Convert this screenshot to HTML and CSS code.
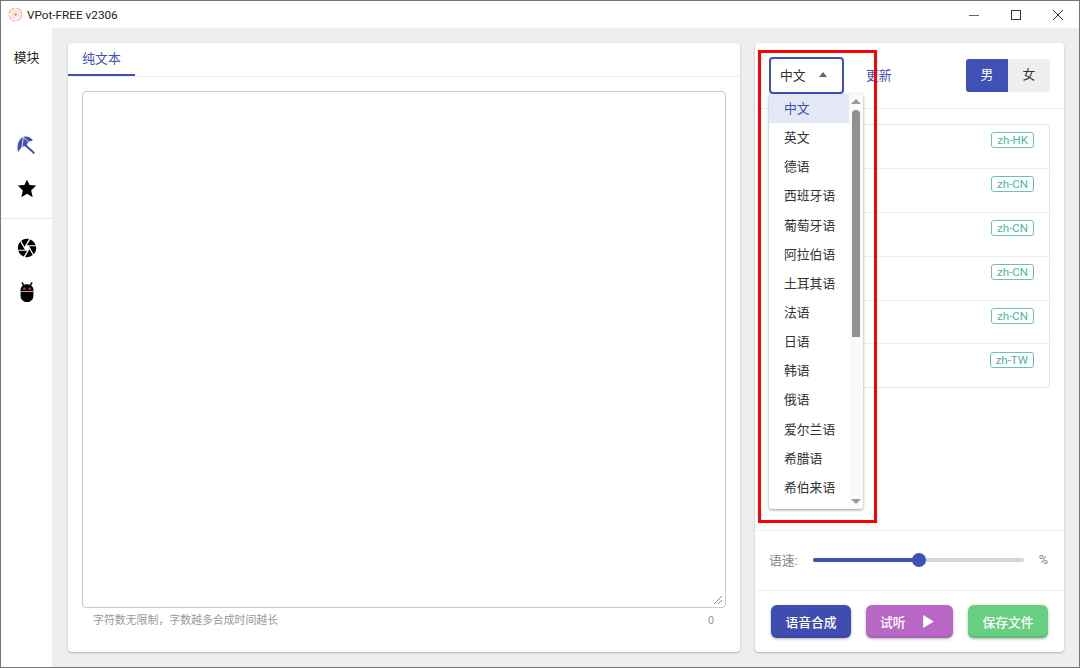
FILE: index.html
```html
<!DOCTYPE html>
<html lang="zh-CN">
<head>
    <meta charset="UTF-8">
    <title>VPot-FREE v2306</title>
    <link rel="stylesheet" href="styles.css">
</head>
<body>
    <div class="window">
        <div class="titlebar">
            <svg class="logo" viewBox="0 0 16 16">
                <circle cx="8" cy="8" r="6.6" fill="none" stroke="#f9b7a5" stroke-width="1.5" stroke-dasharray="9 1.4"/>
                <circle cx="8" cy="8" r="3.6" fill="none" stroke="#fbd0c4" stroke-width="1.2"/>
                <circle cx="8" cy="8" r="1.5" fill="#f08a70"/>
            </svg>
            <span class="app-name">VPot-FREE v2306</span>
            <div class="win-btns">
                <svg viewBox="0 0 12 12"><path d="M1 6.5H11" stroke="#666" stroke-width="1"/></svg>
                <svg viewBox="0 0 12 12"><rect x="1.5" y="1.5" width="9" height="9" fill="none" stroke="#333" stroke-width="1"/></svg>
                <svg viewBox="0 0 12 12"><path d="M1 1L11 11M11 1L1 11" stroke="#333" stroke-width="1"/></svg>
            </div>
        </div>

        <div class="app">
            <nav class="sidebar">
                <div class="side-title">模块</div>
                <div class="side-group">
                    <svg class="side-icon" viewBox="0 0 24 24">
                        <path fill="#3f51b5" d="M2.200 19.600C0.500 12 3 5 8 3.200C12 2 16 3.500 18.500 7L13.500 8.500L11 13L6.500 14Z"/>
                        <path stroke="#fff" stroke-width="0.900" fill="none" d="M8 3.500L6.500 14M8 3.500L13.500 8.500"/>
                        <path stroke="#3f51b5" stroke-width="2.200" d="M10 12L20 21"/>
                    </svg>
                    <svg class="side-icon" viewBox="0 0 24 24"><path d="M12,17.27L18.18,21L16.54,13.64L22,8.24L14.81,7.62L12,2L9.19,7.62L2,8.24L7.45,13.64L5.82,21L12,17.27Z"/></svg>
                </div>
                <div class="side-group side-group-last">
                    <svg class="side-icon" viewBox="0 0 24 24"><path d="M13.73,15L9.83,21.76C10.53,21.91 11.25,22 12,22C14.4,22 16.6,21.15 18.32,19.75L14.66,13.4M2.46,15C3.38,17.92 5.61,20.26 8.45,21.34L12.12,15M8.54,12L4.64,5.25C3,7 2,9.39 2,12C2,12.68 2.07,13.35 2.2,14H9.69M21.54,9C20.62,6.08 18.39,3.74 15.55,2.66L11.88,9M21.8,10H14.31L14.6,10.5L19.36,18.75C21,16.97 22,14.6 22,12C22,11.32 21.93,10.65 21.8,10M10.27,9L14.17,2.24C13.47,2.09 12.75,2 12,2C9.6,2 7.4,2.85 5.68,4.25L9.34,10.6"/></svg>
                    <svg class="side-icon" viewBox="0 0 24 24">
                        <path d="M6.500 1.500L8.500 5M17.500 1.500L15.500 5" stroke="#000" stroke-width="1.600"/>
                        <path d="M5 10C5 6 8 3.500 12 3.500C16 3.500 19 6 19 10V16C19 20 16 23 12 23C8 23 5 20 5 16Z"/>
                        <path d="M5 11.500H19" stroke="#bbb" stroke-width="1"/>
                        <circle cx="9" cy="8.500" r="1.400" fill="#c33"/>
                        <circle cx="15" cy="8.500" r="1.400" fill="#c33"/>
                    </svg>
                </div>
            </nav>

            <main class="content">
                <section class="card editor">
                    <div class="tabs"><div class="tab">纯文本</div></div>
                    <div class="editor-body">
                        <div class="text-box">
                            <svg class="resize" viewBox="0 0 10 10"><path d="M1 9L9 1M5 9L9 5" stroke="#888" stroke-width="1"/></svg>
                        </div>
                        <div class="hint-row">
                            <span>字符数无限制，字数越多合成时间越长</span>
                            <span>0</span>
                        </div>
                    </div>
                </section>

                <section class="card voices">
                    <div class="voice-head">
                        <div class="lang-select">中文<i class="caret-up"></i></div>
                        <a class="refresh">更新</a>
                        <div class="gender">
                            <span class="gender-on">男</span>
                            <span>女</span>
                        </div>
                    </div>

                    <div class="voice-body">
                        <div class="voice-list">
                            <div class="voice-row"><span class="tag">zh-HK</span></div>
                            <div class="voice-row"><span class="tag">zh-CN</span></div>
                            <div class="voice-row"><span class="tag">zh-CN</span></div>
                            <div class="voice-row"><span class="tag">zh-CN</span></div>
                            <div class="voice-row"><span class="tag">zh-CN</span></div>
                            <div class="voice-row"><span class="tag">zh-TW</span></div>
                        </div>
                    </div>

                    <div class="speed-row">
                        <span class="speed-label">语速:</span>
                        <div class="slider">
                            <div class="slider-fill"></div>
                            <div class="slider-thumb"></div>
                        </div>
                        <span class="speed-label">%</span>
                    </div>

                    <div class="actions">
                        <button class="btn btn-blue">语音合成</button>
                        <button class="btn btn-purple">试听<svg viewBox="0 0 12 14"><path d="M1 1L11 7L1 13Z" fill="#fff"/></svg></button>
                        <button class="btn btn-green">保存文件</button>
                    </div>

                    <div class="dropdown">
                        <div class="options">
                            <div class="option selected">中文</div>
                            <div class="option">英文</div>
                            <div class="option">德语</div>
                            <div class="option">西班牙语</div>
                            <div class="option">葡萄牙语</div>
                            <div class="option">阿拉伯语</div>
                            <div class="option">土耳其语</div>
                            <div class="option">法语</div>
                            <div class="option">日语</div>
                            <div class="option">韩语</div>
                            <div class="option">俄语</div>
                            <div class="option">爱尔兰语</div>
                            <div class="option">希腊语</div>
                            <div class="option">希伯来语</div>
                        </div>
                        <div class="scroll">
                            <i class="scroll-up"></i>
                            <div class="scroll-thumb"></div>
                            <i class="scroll-down"></i>
                        </div>
                    </div>

                    <div class="red-box"></div>
                </section>
            </main>
        </div>
    </div>
</body>
</html>
```

FILE: styles.css
```css
* {
    box-sizing: border-box;
}

html, body {
    margin: 0;
    height: 100%;
}

body {
    font-family: "Roboto", "Noto Sans CJK SC", sans-serif;
    font-size: 12.8px;
    color: #333;
    overflow: hidden;
}

.window {
    width: 1080px;
    height: 668px;
    display: flex;
    flex-direction: column;
    border: 1px solid #777;
    background: #eee;
}

.titlebar {
    height: 27px;
    flex: none;
    display: flex;
    align-items: center;
    background: #fff;
    padding-left: 7px;
}

.logo {
    width: 15px;
    height: 15px;
    margin-right: 4px;
}

.app-name {
    font-size: 11.75px;
    color: #222;
}

.win-btns {
    margin-left: auto;
    display: flex;
    align-items: center;
    gap: 30px;
    padding-right: 15px;
}

.win-btns svg {
    width: 12px;
    height: 12px;
}

.app {
    flex: 1;
    display: flex;
    min-height: 0;
}

.sidebar {
    width: 51px;
    flex: none;
    background: #fff;
}

.side-title {
    padding-top: 21px;
    height: 95px;
    text-align: center;
    line-height: 18px;
    color: #222;
}

.side-group {
    height: 96px;
    padding-top: 11px;
    display: flex;
    flex-direction: column;
    align-items: center;
    gap: 22px;
    border-bottom: 1px solid #e8e8e8;
}

.side-group-last {
    border-bottom: 0;
    padding-top: 18px;
}

.side-icon {
    width: 22px;
    height: 22px;
}

.content {
    flex: 1;
    display: flex;
    gap: 15px;
    padding: 15px 15px 15px 16px;
    min-width: 0;
    min-height: 0;
}

.card {
    background: #fff;
    border-radius: 4px;
    box-shadow: 0 1px 2px rgba(0, 0, 0, 0.25);
}

.editor {
    width: 672px;
    flex: none;
    display: flex;
    flex-direction: column;
}

.tabs {
    height: 34px;
    flex: none;
    border-bottom: 1px solid #eee;
}

.tab {
    width: 67px;
    height: 33px;
    text-align: center;
    line-height: 31px;
    color: #3f51b5;
    border-bottom: 2px solid #3f51b5;
}

.editor-body {
    flex: 1;
    padding: 14px 14px 0;
    display: flex;
    flex-direction: column;
}

.text-box {
    height: 517px;
    flex: none;
    border: 1px solid #c8c8c8;
    border-radius: 4px;
    position: relative;
}

.resize {
    position: absolute;
    right: 2px;
    bottom: 2px;
    width: 10px;
    height: 10px;
}

.hint-row {
    display: flex;
    justify-content: space-between;
    padding: 5px 12px 0 11px;
    font-size: 10.9px;
    line-height: 16px;
    color: #999;
}

.voices {
    flex: 1;
    position: relative;
    display: flex;
    flex-direction: column;
    min-width: 0;
}

.voice-head {
    height: 66px;
    flex: none;
    display: flex;
    align-items: center;
    padding: 0 14px;
    border-bottom: 1px solid #eee;
}

.lang-select {
    width: 75px;
    height: 37px;
    border: 2px solid #3f51b5;
    border-radius: 4px;
    display: flex;
    align-items: center;
    padding: 0 0 2px 9px;
    gap: 13px;
}

.caret-up {
    border: 4.500px solid transparent;
    border-top: 0;
    border-bottom: 5px solid #666;
}

.refresh {
    margin: 0 0 2px 22px;
    color: #3f51b5;
}

.gender {
    margin-left: auto;
    display: flex;
    border-radius: 3px;
    overflow: hidden;
    background: #eee;
}

.gender span {
    width: 42px;
    height: 33px;
    text-align: center;
    line-height: 31px;
}

.gender .gender-on {
    background: #3f51b5;
    color: #fff;
}

.voice-body {
    flex: 1;
    min-height: 0;
    padding: 15px 14px 0;
}

.voice-list {
    height: 264px;
    border: 1px solid #e6e6e6;
    border-radius: 4px;
}

.voice-row {
    height: 43.900px;
    padding: 7.400px 15px 0 0;
    display: flex;
    justify-content: flex-end;
    align-items: flex-start;
    border-bottom: 1px solid #eee;
}

.voice-row:last-child {
    height: 42px;
    border-bottom: 0;
}

.tag {
    height: 16px;
    line-height: 14px;
    padding: 0 5px;
    border: 1px solid #68c4b4;
    border-radius: 3px;
    color: #4fb3a2;
    font-size: 11.5px;
}

.speed-row {
    height: 61px;
    flex: none;
    display: flex;
    align-items: center;
    padding: 0 14px 1px;
    border-top: 1px solid #eee;
    border-bottom: 1px solid #eee;
}

.speed-label {
    margin-bottom: 2px;
    color: #888;
}

.slider {
    width: 211px;
    height: 4px;
    margin: 0 15px;
    background: #d4d4d4;
    border-radius: 2px;
    position: relative;
}

.slider-fill {
    width: 106px;
    height: 4px;
    background: #3f51b5;
    border-radius: 2px;
}

.slider-thumb {
    position: absolute;
    left: 99px;
    top: -5px;
    width: 14px;
    height: 14px;
    border-radius: 50%;
    background: #3f51b5;
}

.actions {
    height: 61px;
    flex: none;
    display: flex;
    justify-content: space-between;
    padding: 14px 16px 0;
}

.btn {
    height: 33px;
    border: 0;
    border-radius: 6px;
    padding-bottom: 2px;
    color: #fff;
    font: 500 12.8px "Roboto", "Noto Sans CJK SC", sans-serif;
    box-shadow: inset 0 -2px 0 rgba(0, 0, 0, 0.07), 0 1px 3px rgba(0, 0, 0, 0.3);
}

.btn-blue {
    width: 80px;
    background: #3f4db1;
}

.btn-purple {
    width: 87px;
    background: #b967c7;
    display: flex;
    align-items: center;
    padding-left: 14px;
    gap: 16px;
}

.btn-purple svg {
    width: 13px;
    height: 15px;
}

.btn-green {
    width: 80px;
    background: #66cf80;
}

/* dropdown hangs over the list */
.dropdown {
    position: absolute;
    left: 14px;
    top: 51px;
    width: 94px;
    height: 415px;
    display: flex;
    background: #fff;
    border-radius: 0 0 3px 3px;
    box-shadow: 0 1px 3px rgba(0, 0, 0, 0.4);
    overflow: hidden;
}

.options {
    width: 80px;
    flex: none;
}

.option {
    height: 29.150px;
    line-height: 29px;
    padding-left: 15px;
    color: #333;
}

.option.selected {
    background: #e4e7f4;
    color: #3f51b5;
}

.scroll {
    flex: 1;
    position: relative;
    background: #fafafa;
}

.scroll-up, .scroll-down {
    position: absolute;
    left: 2px;
    border: 5px solid transparent;
    border-top: 0;
    border-bottom: 5px solid #999;
}

.scroll-up {
    top: 5px;
}

.scroll-down {
    bottom: 5px;
    transform: rotate(180deg);
}

.scroll-thumb {
    position: absolute;
    top: 16px;
    left: 3px;
    width: 8px;
    height: 227px;
    background: #909090;
    border-radius: 4px 4px 0 0;
}

/* annotation drawn on the screenshot */
.red-box {
    position: absolute;
    left: 3px;
    top: 7px;
    width: 119px;
    height: 473px;
    border: 3px solid #f00;
}
```
